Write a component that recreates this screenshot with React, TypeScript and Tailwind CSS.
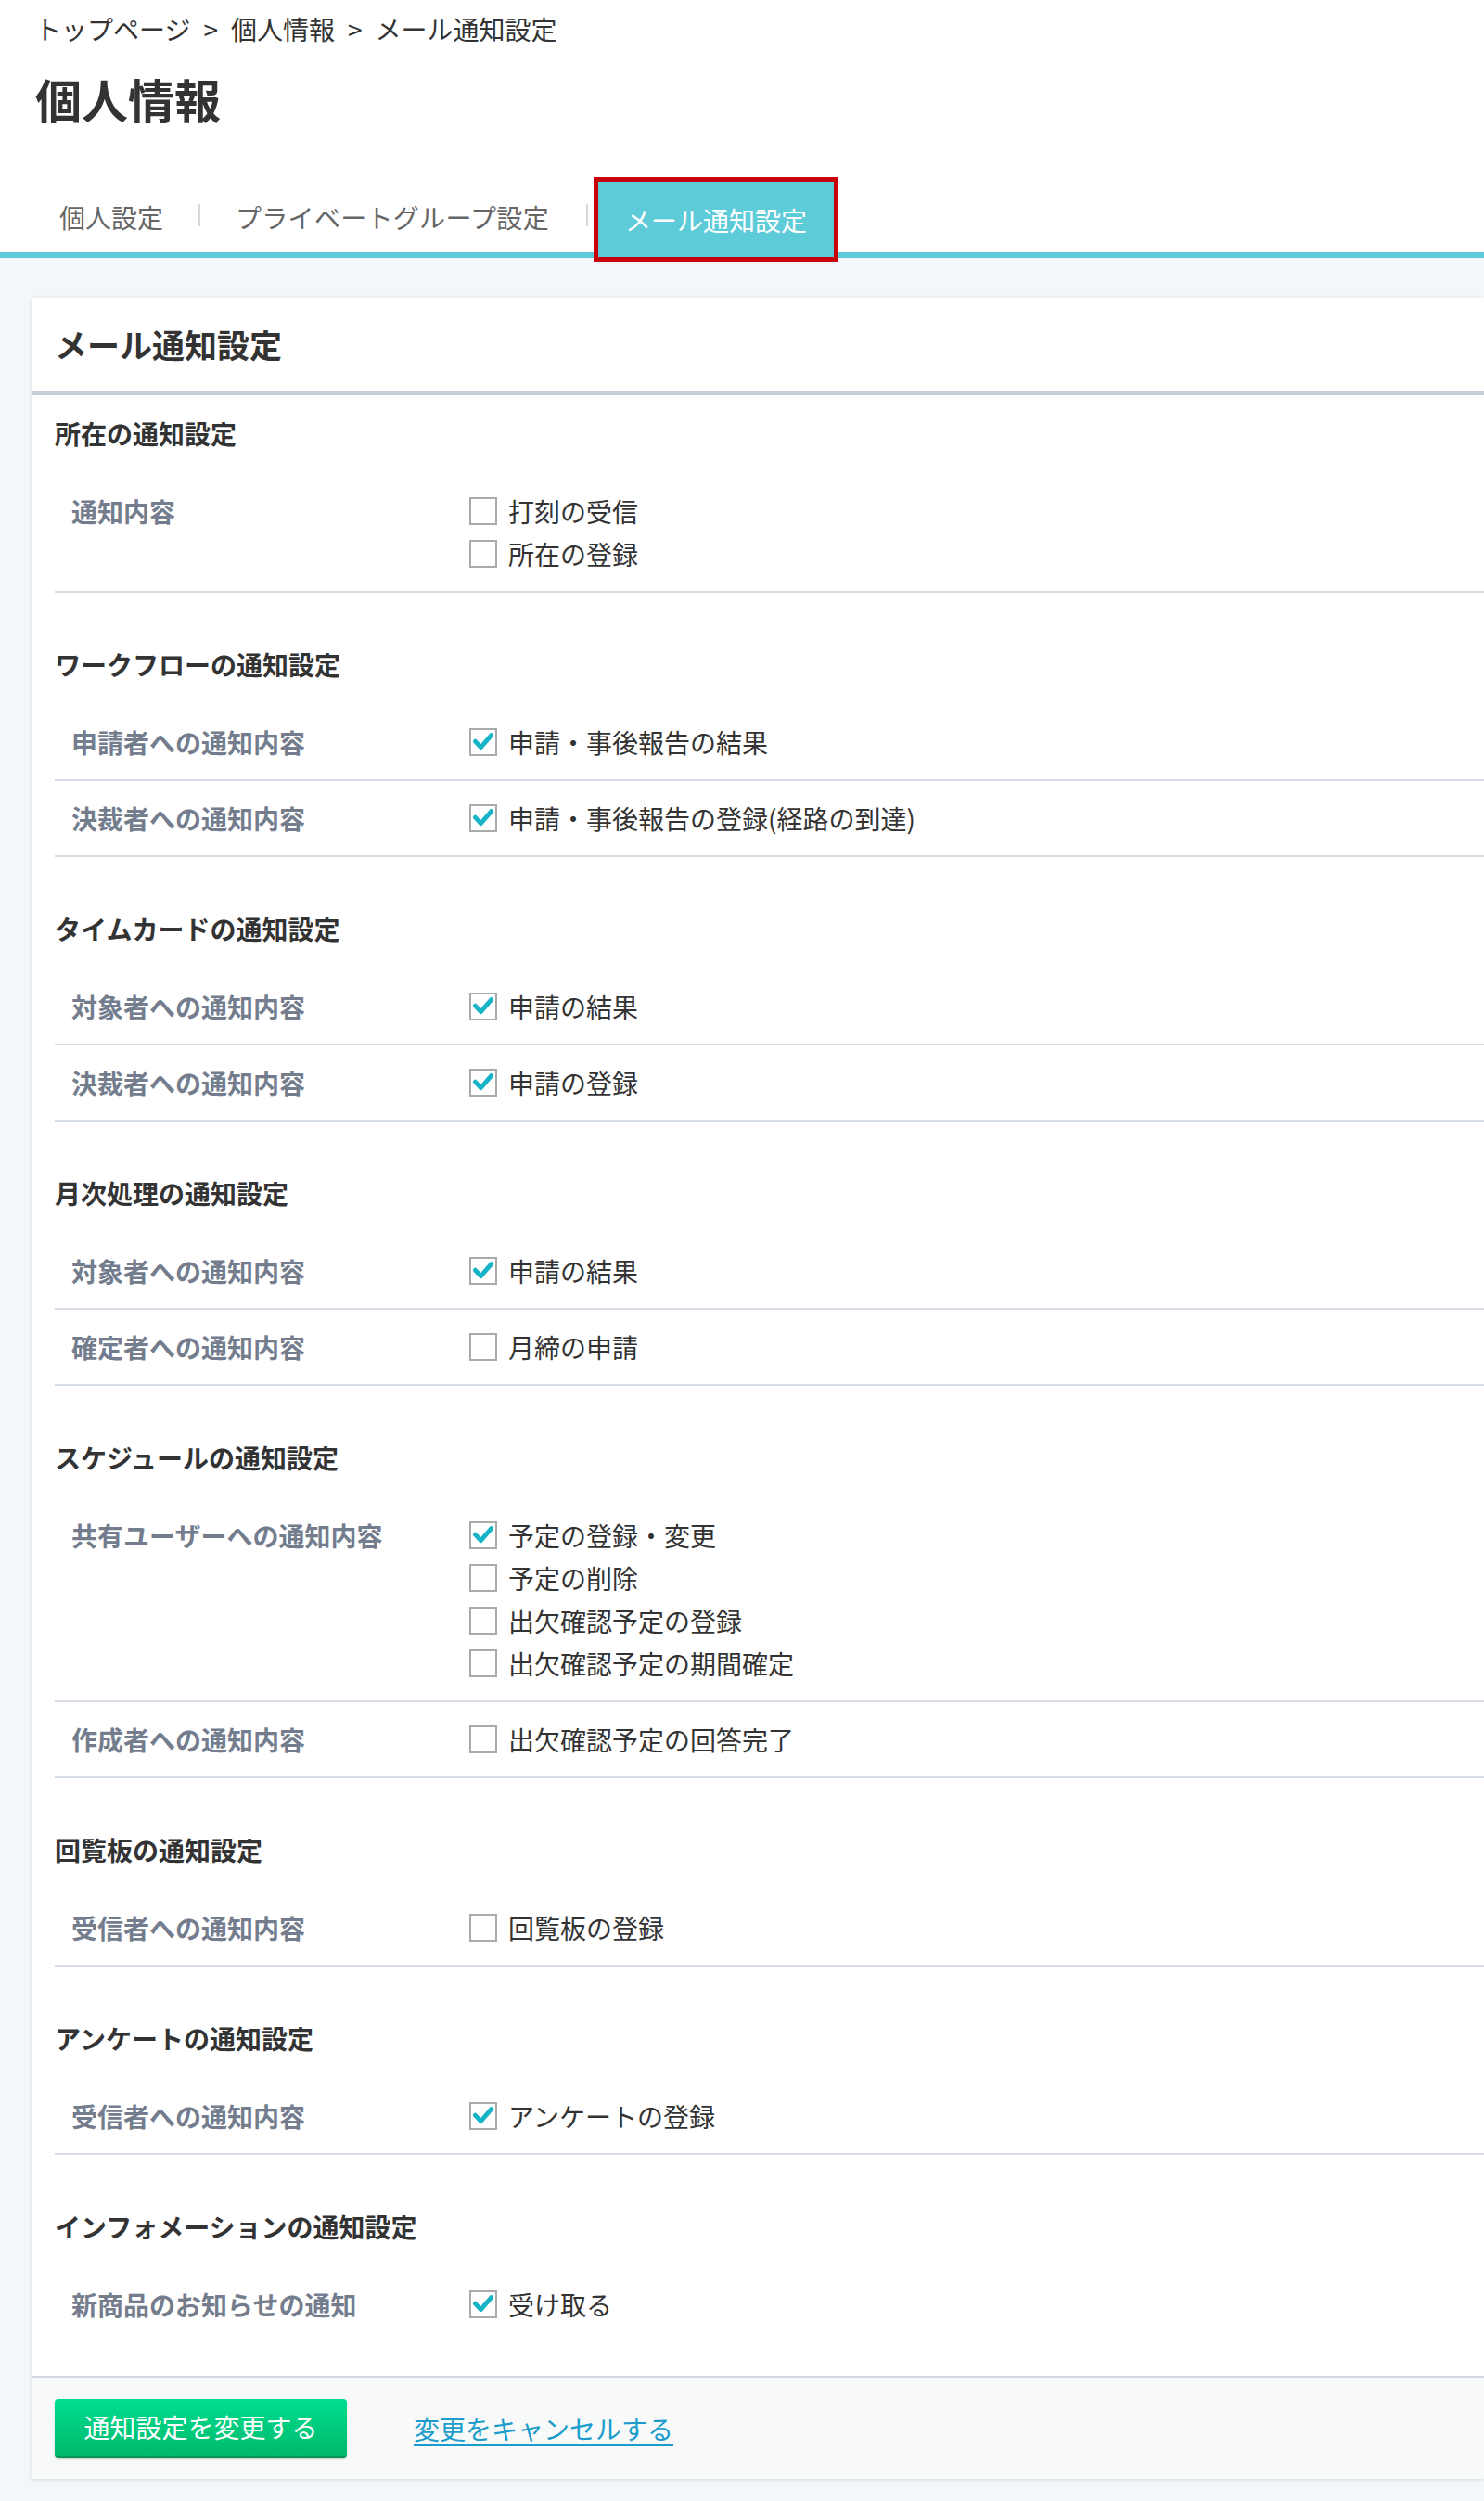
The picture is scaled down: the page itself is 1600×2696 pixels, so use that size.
import React, { useState } from 'react'

type Option = { text: string; checked: boolean }
type Row = { label: string; options: Option[] }
type Section = { title: string; rows: Row[] }

const o = (text: string, checked = false): Option => ({ text, checked })

const SECTIONS: Section[] = [
  {
    title: '所在の通知設定',
    rows: [{ label: '通知内容', options: [o('打刻の受信'), o('所在の登録')] }],
  },
  {
    title: 'ワークフローの通知設定',
    rows: [
      { label: '申請者への通知内容', options: [o('申請・事後報告の結果', true)] },
      { label: '決裁者への通知内容', options: [o('申請・事後報告の登録(経路の到達)', true)] },
    ],
  },
  {
    title: 'タイムカードの通知設定',
    rows: [
      { label: '対象者への通知内容', options: [o('申請の結果', true)] },
      { label: '決裁者への通知内容', options: [o('申請の登録', true)] },
    ],
  },
  {
    title: '月次処理の通知設定',
    rows: [
      { label: '対象者への通知内容', options: [o('申請の結果', true)] },
      { label: '確定者への通知内容', options: [o('月締の申請')] },
    ],
  },
  {
    title: 'スケジュールの通知設定',
    rows: [
      {
        label: '共有ユーザーへの通知内容',
        options: [
          o('予定の登録・変更', true),
          o('予定の削除'),
          o('出欠確認予定の登録'),
          o('出欠確認予定の期間確定'),
        ],
      },
      { label: '作成者への通知内容', options: [o('出欠確認予定の回答完了')] },
    ],
  },
  {
    title: '回覧板の通知設定',
    rows: [{ label: '受信者への通知内容', options: [o('回覧板の登録')] }],
  },
  {
    title: 'アンケートの通知設定',
    rows: [{ label: '受信者への通知内容', options: [o('アンケートの登録', true)] }],
  },
  {
    title: 'インフォメーションの通知設定',
    rows: [{ label: '新商品のお知らせの通知', options: [o('受け取る', true)] }],
  },
]

const CheckBox: React.FC<{ checked: boolean; onToggle: () => void; label: string }> = ({
  checked,
  onToggle,
  label,
}) => (
  <label className="flex items-center h-[46px] cursor-pointer select-none">
    <button
      type="button"
      onClick={onToggle}
      aria-pressed={checked}
      className="w-[30px] h-[30px] border-2 border-[#aaaaaa] bg-white flex items-center justify-center shrink-0"
    >
      {checked && (
        <svg viewBox="0 0 30 30" className="w-[30px] h-[30px]">
          <path
            d="M5 14 L12 21.5 L25 6.5"
            fill="none"
            stroke="#17b3c7"
            strokeWidth="5.5"
            strokeLinecap="round"
            strokeLinejoin="round"
          />
        </svg>
      )}
    </button>
    <span className="ml-[12px] text-[28px] text-[#333333]">{label}</span>
  </label>
)

export default function App() {
  const [state, setState] = useState(() =>
    SECTIONS.map((s) => s.rows.map((r) => r.options.map((opt) => opt.checked)))
  )

  const toggle = (si: number, ri: number, oi: number) => {
    setState((prev) =>
      prev.map((rows, a) =>
        a !== si
          ? rows
          : rows.map((opts, b) => (b !== ri ? opts : opts.map((v, c) => (c === oi ? !v : v))))
      )
    )
  }

  return (
    <div className="w-[1600px] min-h-[2696px] bg-[#f3f6fa] font-['Noto_Sans_CJK_JP','Noto_Sans',sans-serif] text-[#333333] pb-[24px]">
      {/* header */}
      <div className="bg-white">
        <div className="pl-[38px] pt-[11px] text-[28px] leading-[40px] flex">
          <span>トップページ</span>
          <span className="mx-[14px]">&gt;</span>
          <span>個人情報</span>
          <span className="mx-[14px]">&gt;</span>
          <span>メール通知設定</span>
        </div>
        <h1 className="pl-[38px] mt-[25px] text-[50px] leading-[60px] font-bold">個人情報</h1>
        <div className="mt-[55px] pl-[38px] flex items-end">
          <div className="px-[26px] h-[76px] leading-[76px] text-[28px] text-[#666666]">個人設定</div>
          <div className="ml-[12px] mr-[12px] mb-[28px] w-[2px] h-[24px] bg-[#d8d8d8]" />
          <div className="px-[26px] h-[76px] leading-[76px] text-[28px] tracking-[0.3px] text-[#666666]">
            プライベートグループ設定
          </div>
          <div className="ml-[14px] mr-[6px] mb-[28px] w-[2px] h-[24px] bg-[#d8d8d8]" />
          <div className="relative z-10 -mb-[10px] h-[91px] border-[5px] border-[#c8000a] bg-[#5ecbd9] px-[29px] flex items-center text-[28px] text-white">
            メール通知設定
          </div>
        </div>
        <div className="h-[6px] bg-[#5ecbd9]" />
      </div>

      {/* card */}
      <div className="ml-[34px] mt-[43px] bg-white border-l border-[#e3e7ec] shadow-[0_1px_4px_rgba(0,0,0,0.12)]">
        <div className="h-[100px] pl-[24px] flex items-center text-[35px] font-bold">
          メール通知設定
        </div>
        <div className="h-[5px] bg-[#c5cedb]" />

        <div className="pl-[24px] pb-[37px]">
          {SECTIONS.map((section, si) => (
            <div key={section.title}>
              <div
                className={
                  (si === 0 ? 'pt-[17px] ' : 'pt-[53px] ') +
                  'pb-[20px] text-[28px] leading-[48px] font-bold text-[#333333]'
                }
              >
                {section.title}
              </div>
              {section.rows.map((row, ri) => {
                const isLast = si === SECTIONS.length - 1 && ri === section.rows.length - 1
                return (
                  <div
                    key={row.label + ri}
                    className={
                      'flex items-start py-[17px] ' +
                      (isLast ? '' : 'border-b-2 border-[#d6dde6]')
                    }
                  >
                    <div className="w-[447px] shrink-0 pl-[18px] text-[28px] leading-[46px] font-bold text-[#737d8d]">
                      {row.label}
                    </div>
                    <div className="flex flex-col">
                      {row.options.map((opt, oi) => (
                        <CheckBox
                          key={opt.text}
                          label={opt.text}
                          checked={state[si][ri][oi]}
                          onToggle={() => toggle(si, ri, oi)}
                        />
                      ))}
                    </div>
                  </div>
                )
              })}
            </div>
          ))}
        </div>

        {/* footer */}
        <div className="border-t-2 border-[#d3d9e1] bg-[#f8f9f9] h-[111px] pl-[24px] flex items-center">
          <button
            type="button"
            className="w-[315px] h-[64px] rounded-[4px] bg-gradient-to-b from-[#00de8f] to-[#00b96c] border-b-[3px] border-[#00985a] text-white text-[28px] flex items-center justify-center shadow-[0_1px_2px_rgba(0,0,0,0.2)]"
          >
            通知設定を変更する
          </button>
          <a href="#" className="ml-[72px] text-[28px] text-[#1a9dcc] underline underline-offset-[5px]">
            変更をキャンセルする
          </a>
        </div>
      </div>
    </div>
  )
}
